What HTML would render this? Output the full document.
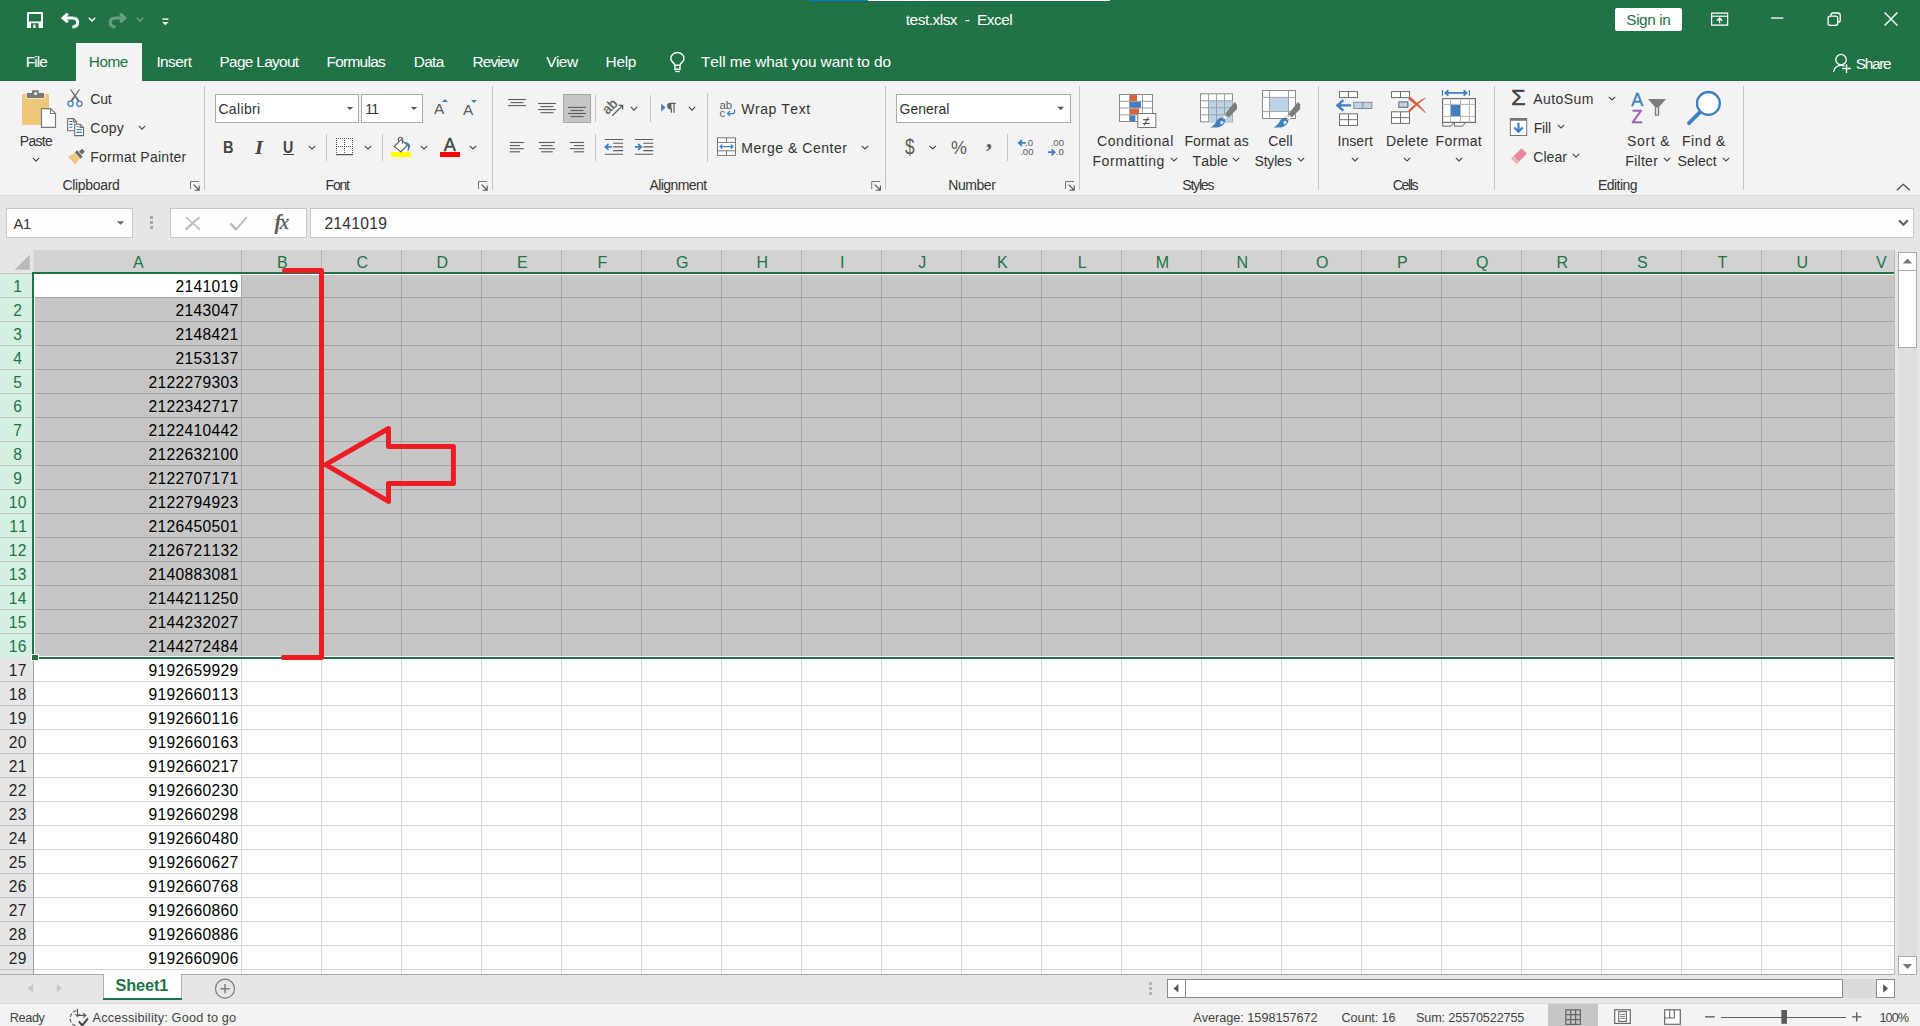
<!DOCTYPE html>
<html lang="en"><head><meta charset="utf-8"><title>test.xlsx - Excel</title>
<style>
html,body{margin:0;padding:0;}
body{width:1920px;height:1026px;overflow:hidden;background:#e6e6e6;position:relative;font-family:"Liberation Sans",sans-serif;font-kerning:none;}
.b{position:absolute;}
.t{position:absolute;white-space:pre;}
svg.ov{position:absolute;left:0;top:0;}
</style></head><body>
<div class="b" style="left:0px;top:0px;width:1920px;height:81px;background:#217346;"></div>
<div class="b" style="left:809px;top:0px;width:59px;height:1px;background:#0078d7;"></div>
<div class="b" style="left:868px;top:0px;width:242px;height:1px;background:#ffffff;"></div>
<div class="b" style="left:76px;top:43px;width:66px;height:38px;background:#f3f3f3;"></div>
<div class="b" style="left:0px;top:81px;width:1920px;height:114px;background:#f3f3f3;"></div>
<div class="b" style="left:0px;top:195px;width:1920px;height:1px;background:#d6d6d6;"></div>
<span class="t " style="left:25.75px;top:53px;font-size:15.4px;line-height:17px;letter-spacing:-0.920px;color:#ffffff;">File</span>
<span class="t " style="left:88.75px;top:53px;font-size:15.4px;line-height:17px;letter-spacing:-0.475px;color:#217346;">Home</span>
<span class="t " style="left:156.40px;top:53px;font-size:15.4px;line-height:17px;letter-spacing:-0.583px;color:#ffffff;">Insert</span>
<span class="t " style="left:219.40px;top:53px;font-size:15.4px;line-height:17px;letter-spacing:-0.668px;color:#ffffff;">Page Layout</span>
<span class="t " style="left:326.50px;top:53px;font-size:15.4px;line-height:17px;letter-spacing:-0.696px;color:#ffffff;">Formulas</span>
<span class="t " style="left:413.80px;top:53px;font-size:15.4px;line-height:17px;letter-spacing:-0.680px;color:#ffffff;">Data</span>
<span class="t " style="left:472.60px;top:53px;font-size:15.4px;line-height:17px;letter-spacing:-0.887px;color:#ffffff;">Review</span>
<span class="t " style="left:546.20px;top:53px;font-size:15.4px;line-height:17px;letter-spacing:-0.515px;color:#ffffff;">View</span>
<span class="t " style="left:605.60px;top:53px;font-size:15.4px;line-height:17px;letter-spacing:-0.290px;color:#ffffff;">Help</span>
<span class="t " style="left:701.00px;top:53px;font-size:15.4px;line-height:17px;letter-spacing:-0.058px;color:#ffffff;">Tell me what you want to do</span>
<span class="t " style="left:905.80px;top:11px;font-size:15.4px;line-height:17px;letter-spacing:-0.479px;color:#ffffff;">test.xlsx  -  Excel</span>
<div class="b" style="left:1615px;top:8px;width:67px;height:23px;background:#ffffff;border-radius:2px;"></div>
<span class="t " style="left:1626.30px;top:11px;font-size:15.4px;line-height:17px;letter-spacing:-0.431px;color:#217346;">Sign in</span>
<span class="t " style="left:1855.80px;top:55px;font-size:15.4px;line-height:17px;letter-spacing:-1.297px;color:#ffffff;">Share</span>
<div class="b" style="left:215px;top:94px;width:144px;height:29px;background:#fff;border:1px solid #ababab;box-sizing:border-box;"></div>
<div class="b" style="left:361px;top:94px;width:62px;height:29px;background:#fff;border:1px solid #ababab;box-sizing:border-box;"></div>
<div class="b" style="left:896px;top:94px;width:175px;height:29px;background:#fff;border:1px solid #ababab;box-sizing:border-box;"></div>
<div class="b" style="left:563px;top:94px;width:28px;height:29px;background:#c6c6c6;border:1px solid #a6a6a6;box-sizing:border-box;"></div>
<span class="t " style="left:19.75px;top:133px;font-size:14px;line-height:16px;letter-spacing:-0.712px;color:#333333;">Paste</span>
<span class="t " style="left:90.25px;top:91px;font-size:14px;line-height:16px;letter-spacing:-0.219px;color:#333333;">Cut</span>
<span class="t " style="left:90.25px;top:120px;font-size:14px;line-height:16px;letter-spacing:0.273px;color:#333333;">Copy</span>
<span class="t " style="left:90.25px;top:149px;font-size:14px;line-height:16px;letter-spacing:0.263px;color:#333333;">Format Painter</span>
<span class="t " style="left:62.50px;top:177px;font-size:14px;line-height:16px;letter-spacing:-0.333px;color:#333333;">Clipboard</span>
<span class="t " style="left:218.40px;top:101px;font-size:14px;line-height:16px;letter-spacing:0.355px;color:#333333;">Calibri</span>
<span class="t " style="left:365.30px;top:101px;font-size:14px;line-height:16px;letter-spacing:-1.829px;color:#333333;">11</span>
<span class="t " style="left:325.50px;top:177px;font-size:14px;line-height:16px;letter-spacing:-1.171px;color:#333333;">Font</span>
<span class="t " style="left:741.25px;top:101px;font-size:14px;line-height:16px;letter-spacing:0.531px;color:#333333;">Wrap Text</span>
<span class="t " style="left:741.25px;top:140px;font-size:14px;line-height:16px;letter-spacing:0.526px;color:#333333;">Merge &amp; Center</span>
<span class="t " style="left:649.40px;top:177px;font-size:14px;line-height:16px;letter-spacing:-0.557px;color:#333333;">Alignment</span>
<span class="t " style="left:899.60px;top:101px;font-size:14px;line-height:16px;letter-spacing:-0.000px;color:#333333;">General</span>
<span class="t " style="left:948.30px;top:177px;font-size:14px;line-height:16px;letter-spacing:-0.458px;color:#333333;">Number</span>
<span class="t " style="left:1096.90px;top:133px;font-size:14px;line-height:16px;letter-spacing:0.646px;color:#333333;">Conditional</span>
<span class="t " style="left:1092.50px;top:153px;font-size:14px;line-height:16px;letter-spacing:0.555px;color:#333333;">Formatting</span>
<span class="t " style="left:1184.40px;top:133px;font-size:14px;line-height:16px;letter-spacing:0.168px;color:#333333;">Format as</span>
<span class="t " style="left:1192.50px;top:153px;font-size:14px;line-height:16px;letter-spacing:0.159px;color:#333333;">Table</span>
<span class="t " style="left:1268.30px;top:133px;font-size:14px;line-height:16px;letter-spacing:0.028px;color:#333333;">Cell</span>
<span class="t " style="left:1254.50px;top:153px;font-size:14px;line-height:16px;letter-spacing:-0.185px;color:#333333;">Styles</span>
<span class="t " style="left:1182.30px;top:177px;font-size:14px;line-height:16px;letter-spacing:-1.205px;color:#333333;">Styles</span>
<span class="t " style="left:1337.50px;top:133px;font-size:14px;line-height:16px;letter-spacing:0.057px;color:#333333;">Insert</span>
<span class="t " style="left:1386.00px;top:133px;font-size:14px;line-height:16px;letter-spacing:0.367px;color:#333333;">Delete</span>
<span class="t " style="left:1435.60px;top:133px;font-size:14px;line-height:16px;letter-spacing:0.353px;color:#333333;">Format</span>
<span class="t " style="left:1392.70px;top:177px;font-size:14px;line-height:16px;letter-spacing:-1.354px;color:#333333;">Cells</span>
<span class="t " style="left:1533.30px;top:91px;font-size:14px;line-height:16px;letter-spacing:0.419px;color:#333333;">AutoSum</span>
<span class="t " style="left:1533.75px;top:120px;font-size:14px;line-height:16px;letter-spacing:-0.210px;color:#333333;">Fill</span>
<span class="t " style="left:1533.30px;top:149px;font-size:14px;line-height:16px;letter-spacing:0.037px;color:#333333;">Clear</span>
<span class="t " style="left:1627.00px;top:133px;font-size:14px;line-height:16px;letter-spacing:0.719px;color:#333333;">Sort &amp;</span>
<span class="t " style="left:1625.30px;top:153px;font-size:14px;line-height:16px;letter-spacing:0.278px;color:#333333;">Filter</span>
<span class="t " style="left:1682.00px;top:133px;font-size:14px;line-height:16px;letter-spacing:0.568px;color:#333333;">Find &amp;</span>
<span class="t " style="left:1677.50px;top:153px;font-size:14px;line-height:16px;letter-spacing:0.058px;color:#333333;">Select</span>
<span class="t " style="left:1598.00px;top:177px;font-size:14px;line-height:16px;letter-spacing:-0.550px;color:#333333;">Editing</span>
<span class="t" style="left:222.6px;top:139px;font-size:16.6px;line-height:18px;font-weight:bold;color:#444;transform:scaleX(0.88);transform-origin:0 0">B</span>
<span class="t" style="left:254.6px;top:138.6px;font-size:18px;line-height:18px;font-weight:bold;font-style:italic;font-family:'Liberation Serif',serif;color:#444;transform:scaleX(1.15);transform-origin:0 0">I</span>
<span class="t" style="left:282.8px;top:139px;font-size:15.8px;line-height:18px;font-weight:bold;color:#444;letter-spacing:0;transform:scaleX(0.9);transform-origin:0 0">U</span>
<div class="b" style="left:283px;top:154px;width:11px;height:1px;background:#444;"></div>
<span class="t " style="left:433.90px;top:100px;font-size:15.4px;line-height:17px;letter-spacing:0.000px;color:#5c5c5c;">A</span>
<span class="t " style="left:463.00px;top:101px;font-size:15.4px;line-height:17px;letter-spacing:0.000px;color:#5c5c5c;">A</span>
<span class="t" style="left:443.7px;top:135.6px;font-size:18.2px;line-height:18px;color:#444;-webkit-text-stroke:0.35px #444">A</span>
<div class="b" style="left:440px;top:152px;width:20px;height:5px;background:#ff0000;"></div>
<div class="b" style="left:391px;top:152px;width:20px;height:5px;background:#ffff00;"></div>
<span class="t" style="left:904.6px;top:136.4px;font-size:21.5px;line-height:22px;color:#5c5c5c;transform:scaleX(0.8);transform-origin:0 0">$</span>
<span class="t" style="left:950.6px;top:138.4px;font-size:18.6px;line-height:19px;color:#5c5c5c;letter-spacing:-1px;transform:scaleX(0.96);transform-origin:0 0">%</span>
<span class="t" style="left:986px;top:127px;font-size:24px;line-height:24px;font-weight:bold;color:#5c5c5c;font-family:'Liberation Serif',serif">,</span>
<span class="t" style="left:1510.6px;top:87.3px;font-size:22px;line-height:22px;color:#444;-webkit-text-stroke:0.4px #444;transform:scaleX(1.08);transform-origin:0 0">&Sigma;</span>
<div class="b" style="left:204px;top:86px;width:1px;height:104px;background:#c4c4c4;"></div>
<div class="b" style="left:492px;top:86px;width:1px;height:104px;background:#c4c4c4;"></div>
<div class="b" style="left:885px;top:86px;width:1px;height:104px;background:#c4c4c4;"></div>
<div class="b" style="left:1079px;top:86px;width:1px;height:104px;background:#c4c4c4;"></div>
<div class="b" style="left:1318px;top:86px;width:1px;height:104px;background:#c4c4c4;"></div>
<div class="b" style="left:1494px;top:86px;width:1px;height:104px;background:#c4c4c4;"></div>
<div class="b" style="left:1743px;top:86px;width:1px;height:104px;background:#c4c4c4;"></div>
<div class="b" style="left:707px;top:93px;width:1px;height:69px;background:#c4c4c4;"></div>
<div class="b" style="left:326px;top:134px;width:1px;height:27px;background:#c4c4c4;"></div>
<div class="b" style="left:382px;top:134px;width:1px;height:27px;background:#c4c4c4;"></div>
<div class="b" style="left:595px;top:95px;width:1px;height:27px;background:#c4c4c4;"></div>
<div class="b" style="left:650px;top:95px;width:1px;height:27px;background:#c4c4c4;"></div>
<div class="b" style="left:595px;top:134px;width:1px;height:27px;background:#c4c4c4;"></div>
<div class="b" style="left:1007px;top:134px;width:1px;height:27px;background:#c4c4c4;"></div>
<div class="b" style="left:6px;top:208px;width:127px;height:30px;background:#fdfdfd;border:1px solid #c8c8c8;box-sizing:border-box;"></div>
<div class="b" style="left:170px;top:208px;width:137px;height:30px;background:#fdfdfd;border:1px solid #c8c8c8;box-sizing:border-box;"></div>
<div class="b" style="left:310px;top:208px;width:1604px;height:30px;background:#fdfdfd;border:1px solid #c8c8c8;box-sizing:border-box;"></div>
<span class="t " style="left:13.50px;top:216px;font-size:14.7px;line-height:16px;letter-spacing:-0.228px;color:#333;">A1</span>
<span class="t " style="left:324.40px;top:215px;font-size:15.6px;line-height:17px;letter-spacing:0.296px;color:#333;">2141019</span>
<span class="t" style="left:274.6px;top:209.5px;font-size:20.5px;line-height:24px;font-style:italic;font-family:'Liberation Serif',serif;color:#5c5c5c;letter-spacing:-1.6px;font-weight:bold">f<span style="font-weight:normal;-webkit-text-stroke:0.3px #5c5c5c">x</span></span>
<div class="b" style="left:150px;top:216px;width:3px;height:3px;background:#a8a8a8;"></div>
<div class="b" style="left:150px;top:221px;width:3px;height:3px;background:#a8a8a8;"></div>
<div class="b" style="left:150px;top:226px;width:3px;height:3px;background:#a8a8a8;"></div>
<div class="b" style="left:34px;top:274px;width:1860px;height:700px;background:#ffffff;"></div>
<div class="b" style="left:33px;top:250px;width:1861px;height:22px;background:#d2d2d2;"></div>
<div class="b" style="left:35px;top:275px;width:1859px;height:382px;background:#c6c6c6;"></div>
<div class="b" style="left:35px;top:275px;width:206px;height:22px;background:#ffffff;"></div>
<div class="b" style="left:0px;top:274px;width:33px;height:384px;background:#d3f0e0;"></div>
<div class="b" style="left:0px;top:658px;width:33px;height:316px;background:#e6e6e6;"></div>
<div class="b" style="left:241px;top:250px;width:1px;height:22px;background:#b4b4b4;"></div>
<div class="b" style="left:241px;top:275px;width:1px;height:382px;background:#a3a3a3;"></div>
<div class="b" style="left:241px;top:659px;width:1px;height:315px;background:#d4d4d4;"></div>
<div class="b" style="left:321px;top:250px;width:1px;height:22px;background:#b4b4b4;"></div>
<div class="b" style="left:321px;top:275px;width:1px;height:382px;background:#a3a3a3;"></div>
<div class="b" style="left:321px;top:659px;width:1px;height:315px;background:#d4d4d4;"></div>
<div class="b" style="left:401px;top:250px;width:1px;height:22px;background:#b4b4b4;"></div>
<div class="b" style="left:401px;top:275px;width:1px;height:382px;background:#a3a3a3;"></div>
<div class="b" style="left:401px;top:659px;width:1px;height:315px;background:#d4d4d4;"></div>
<div class="b" style="left:481px;top:250px;width:1px;height:22px;background:#b4b4b4;"></div>
<div class="b" style="left:481px;top:275px;width:1px;height:382px;background:#a3a3a3;"></div>
<div class="b" style="left:481px;top:659px;width:1px;height:315px;background:#d4d4d4;"></div>
<div class="b" style="left:561px;top:250px;width:1px;height:22px;background:#b4b4b4;"></div>
<div class="b" style="left:561px;top:275px;width:1px;height:382px;background:#a3a3a3;"></div>
<div class="b" style="left:561px;top:659px;width:1px;height:315px;background:#d4d4d4;"></div>
<div class="b" style="left:641px;top:250px;width:1px;height:22px;background:#b4b4b4;"></div>
<div class="b" style="left:641px;top:275px;width:1px;height:382px;background:#a3a3a3;"></div>
<div class="b" style="left:641px;top:659px;width:1px;height:315px;background:#d4d4d4;"></div>
<div class="b" style="left:721px;top:250px;width:1px;height:22px;background:#b4b4b4;"></div>
<div class="b" style="left:721px;top:275px;width:1px;height:382px;background:#a3a3a3;"></div>
<div class="b" style="left:721px;top:659px;width:1px;height:315px;background:#d4d4d4;"></div>
<div class="b" style="left:801px;top:250px;width:1px;height:22px;background:#b4b4b4;"></div>
<div class="b" style="left:801px;top:275px;width:1px;height:382px;background:#a3a3a3;"></div>
<div class="b" style="left:801px;top:659px;width:1px;height:315px;background:#d4d4d4;"></div>
<div class="b" style="left:881px;top:250px;width:1px;height:22px;background:#b4b4b4;"></div>
<div class="b" style="left:881px;top:275px;width:1px;height:382px;background:#a3a3a3;"></div>
<div class="b" style="left:881px;top:659px;width:1px;height:315px;background:#d4d4d4;"></div>
<div class="b" style="left:961px;top:250px;width:1px;height:22px;background:#b4b4b4;"></div>
<div class="b" style="left:961px;top:275px;width:1px;height:382px;background:#a3a3a3;"></div>
<div class="b" style="left:961px;top:659px;width:1px;height:315px;background:#d4d4d4;"></div>
<div class="b" style="left:1041px;top:250px;width:1px;height:22px;background:#b4b4b4;"></div>
<div class="b" style="left:1041px;top:275px;width:1px;height:382px;background:#a3a3a3;"></div>
<div class="b" style="left:1041px;top:659px;width:1px;height:315px;background:#d4d4d4;"></div>
<div class="b" style="left:1121px;top:250px;width:1px;height:22px;background:#b4b4b4;"></div>
<div class="b" style="left:1121px;top:275px;width:1px;height:382px;background:#a3a3a3;"></div>
<div class="b" style="left:1121px;top:659px;width:1px;height:315px;background:#d4d4d4;"></div>
<div class="b" style="left:1201px;top:250px;width:1px;height:22px;background:#b4b4b4;"></div>
<div class="b" style="left:1201px;top:275px;width:1px;height:382px;background:#a3a3a3;"></div>
<div class="b" style="left:1201px;top:659px;width:1px;height:315px;background:#d4d4d4;"></div>
<div class="b" style="left:1281px;top:250px;width:1px;height:22px;background:#b4b4b4;"></div>
<div class="b" style="left:1281px;top:275px;width:1px;height:382px;background:#a3a3a3;"></div>
<div class="b" style="left:1281px;top:659px;width:1px;height:315px;background:#d4d4d4;"></div>
<div class="b" style="left:1361px;top:250px;width:1px;height:22px;background:#b4b4b4;"></div>
<div class="b" style="left:1361px;top:275px;width:1px;height:382px;background:#a3a3a3;"></div>
<div class="b" style="left:1361px;top:659px;width:1px;height:315px;background:#d4d4d4;"></div>
<div class="b" style="left:1441px;top:250px;width:1px;height:22px;background:#b4b4b4;"></div>
<div class="b" style="left:1441px;top:275px;width:1px;height:382px;background:#a3a3a3;"></div>
<div class="b" style="left:1441px;top:659px;width:1px;height:315px;background:#d4d4d4;"></div>
<div class="b" style="left:1521px;top:250px;width:1px;height:22px;background:#b4b4b4;"></div>
<div class="b" style="left:1521px;top:275px;width:1px;height:382px;background:#a3a3a3;"></div>
<div class="b" style="left:1521px;top:659px;width:1px;height:315px;background:#d4d4d4;"></div>
<div class="b" style="left:1601px;top:250px;width:1px;height:22px;background:#b4b4b4;"></div>
<div class="b" style="left:1601px;top:275px;width:1px;height:382px;background:#a3a3a3;"></div>
<div class="b" style="left:1601px;top:659px;width:1px;height:315px;background:#d4d4d4;"></div>
<div class="b" style="left:1681px;top:250px;width:1px;height:22px;background:#b4b4b4;"></div>
<div class="b" style="left:1681px;top:275px;width:1px;height:382px;background:#a3a3a3;"></div>
<div class="b" style="left:1681px;top:659px;width:1px;height:315px;background:#d4d4d4;"></div>
<div class="b" style="left:1761px;top:250px;width:1px;height:22px;background:#b4b4b4;"></div>
<div class="b" style="left:1761px;top:275px;width:1px;height:382px;background:#a3a3a3;"></div>
<div class="b" style="left:1761px;top:659px;width:1px;height:315px;background:#d4d4d4;"></div>
<div class="b" style="left:1841px;top:250px;width:1px;height:22px;background:#b4b4b4;"></div>
<div class="b" style="left:1841px;top:275px;width:1px;height:382px;background:#a3a3a3;"></div>
<div class="b" style="left:1841px;top:659px;width:1px;height:315px;background:#d4d4d4;"></div>
<div class="b" style="left:241px;top:275px;width:1px;height:22px;background:#a3a3a3;"></div>
<div class="b" style="left:35px;top:297px;width:1859px;height:1px;background:#a3a3a3;"></div>
<div class="b" style="left:0px;top:297px;width:32px;height:1px;background:#c4c8c5;"></div>
<div class="b" style="left:35px;top:321px;width:1859px;height:1px;background:#a3a3a3;"></div>
<div class="b" style="left:0px;top:321px;width:32px;height:1px;background:#c4c8c5;"></div>
<div class="b" style="left:35px;top:345px;width:1859px;height:1px;background:#a3a3a3;"></div>
<div class="b" style="left:0px;top:345px;width:32px;height:1px;background:#c4c8c5;"></div>
<div class="b" style="left:35px;top:369px;width:1859px;height:1px;background:#a3a3a3;"></div>
<div class="b" style="left:0px;top:369px;width:32px;height:1px;background:#c4c8c5;"></div>
<div class="b" style="left:35px;top:393px;width:1859px;height:1px;background:#a3a3a3;"></div>
<div class="b" style="left:0px;top:393px;width:32px;height:1px;background:#c4c8c5;"></div>
<div class="b" style="left:35px;top:417px;width:1859px;height:1px;background:#a3a3a3;"></div>
<div class="b" style="left:0px;top:417px;width:32px;height:1px;background:#c4c8c5;"></div>
<div class="b" style="left:35px;top:441px;width:1859px;height:1px;background:#a3a3a3;"></div>
<div class="b" style="left:0px;top:441px;width:32px;height:1px;background:#c4c8c5;"></div>
<div class="b" style="left:35px;top:465px;width:1859px;height:1px;background:#a3a3a3;"></div>
<div class="b" style="left:0px;top:465px;width:32px;height:1px;background:#c4c8c5;"></div>
<div class="b" style="left:35px;top:489px;width:1859px;height:1px;background:#a3a3a3;"></div>
<div class="b" style="left:0px;top:489px;width:32px;height:1px;background:#c4c8c5;"></div>
<div class="b" style="left:35px;top:513px;width:1859px;height:1px;background:#a3a3a3;"></div>
<div class="b" style="left:0px;top:513px;width:32px;height:1px;background:#c4c8c5;"></div>
<div class="b" style="left:35px;top:537px;width:1859px;height:1px;background:#a3a3a3;"></div>
<div class="b" style="left:0px;top:537px;width:32px;height:1px;background:#c4c8c5;"></div>
<div class="b" style="left:35px;top:561px;width:1859px;height:1px;background:#a3a3a3;"></div>
<div class="b" style="left:0px;top:561px;width:32px;height:1px;background:#c4c8c5;"></div>
<div class="b" style="left:35px;top:585px;width:1859px;height:1px;background:#a3a3a3;"></div>
<div class="b" style="left:0px;top:585px;width:32px;height:1px;background:#c4c8c5;"></div>
<div class="b" style="left:35px;top:609px;width:1859px;height:1px;background:#a3a3a3;"></div>
<div class="b" style="left:0px;top:609px;width:32px;height:1px;background:#c4c8c5;"></div>
<div class="b" style="left:35px;top:633px;width:1859px;height:1px;background:#a3a3a3;"></div>
<div class="b" style="left:0px;top:633px;width:32px;height:1px;background:#c4c8c5;"></div>
<div class="b" style="left:34px;top:681px;width:1860px;height:1px;background:#d4d4d4;"></div>
<div class="b" style="left:0px;top:681px;width:33px;height:1px;background:#c3c3c3;"></div>
<div class="b" style="left:34px;top:705px;width:1860px;height:1px;background:#d4d4d4;"></div>
<div class="b" style="left:0px;top:705px;width:33px;height:1px;background:#c3c3c3;"></div>
<div class="b" style="left:34px;top:729px;width:1860px;height:1px;background:#d4d4d4;"></div>
<div class="b" style="left:0px;top:729px;width:33px;height:1px;background:#c3c3c3;"></div>
<div class="b" style="left:34px;top:753px;width:1860px;height:1px;background:#d4d4d4;"></div>
<div class="b" style="left:0px;top:753px;width:33px;height:1px;background:#c3c3c3;"></div>
<div class="b" style="left:34px;top:777px;width:1860px;height:1px;background:#d4d4d4;"></div>
<div class="b" style="left:0px;top:777px;width:33px;height:1px;background:#c3c3c3;"></div>
<div class="b" style="left:34px;top:801px;width:1860px;height:1px;background:#d4d4d4;"></div>
<div class="b" style="left:0px;top:801px;width:33px;height:1px;background:#c3c3c3;"></div>
<div class="b" style="left:34px;top:825px;width:1860px;height:1px;background:#d4d4d4;"></div>
<div class="b" style="left:0px;top:825px;width:33px;height:1px;background:#c3c3c3;"></div>
<div class="b" style="left:34px;top:849px;width:1860px;height:1px;background:#d4d4d4;"></div>
<div class="b" style="left:0px;top:849px;width:33px;height:1px;background:#c3c3c3;"></div>
<div class="b" style="left:34px;top:873px;width:1860px;height:1px;background:#d4d4d4;"></div>
<div class="b" style="left:0px;top:873px;width:33px;height:1px;background:#c3c3c3;"></div>
<div class="b" style="left:34px;top:897px;width:1860px;height:1px;background:#d4d4d4;"></div>
<div class="b" style="left:0px;top:897px;width:33px;height:1px;background:#c3c3c3;"></div>
<div class="b" style="left:34px;top:921px;width:1860px;height:1px;background:#d4d4d4;"></div>
<div class="b" style="left:0px;top:921px;width:33px;height:1px;background:#c3c3c3;"></div>
<div class="b" style="left:34px;top:945px;width:1860px;height:1px;background:#d4d4d4;"></div>
<div class="b" style="left:0px;top:945px;width:33px;height:1px;background:#c3c3c3;"></div>
<div class="b" style="left:34px;top:969px;width:1860px;height:1px;background:#d4d4d4;"></div>
<div class="b" style="left:0px;top:969px;width:33px;height:1px;background:#c3c3c3;"></div>
<div class="b" style="left:33px;top:659px;width:1px;height:315px;background:#a0a0a0;"></div>
<div class="b" style="left:0px;top:273px;width:32px;height:1px;background:#c6c6c6;"></div>
<div class="b" style="left:33px;top:250px;width:1px;height:22px;background:#dcdcdc;"></div>
<div class="b" style="left:0px;top:974px;width:1895px;height:1px;background:#a8a8a8;"></div>
<div class="b" style="left:1894px;top:250px;width:1px;height:725px;background:#bdbdbd;"></div>
<div class="b" style="left:32px;top:272px;width:1862px;height:2px;background:#217346;"></div>
<div class="b" style="left:32px;top:272px;width:2px;height:386px;background:#217346;"></div>
<div class="b" style="left:32px;top:657px;width:1862px;height:2px;background:#217346;"></div>
<div class="b" style="left:34px;top:274px;width:1860px;height:1px;background:#ffffff;"></div>
<div class="b" style="left:34px;top:274px;width:1px;height:383px;background:#ffffff;"></div>
<div class="b" style="left:34px;top:656px;width:1860px;height:1px;background:#ffffff;"></div>
<div class="b" style="left:31px;top:654px;width:8px;height:7px;background:#ffffff;"></div>
<div class="b" style="left:32px;top:655px;width:6px;height:5px;background:#217346;"></div>
<div class="b" style="left:0px;top:654px;width:31px;height:4px;background:#d3f0e0;"></div>
<span class="t" style="left:132.96px;top:254px;font-size:16px;line-height:17px;color:#217346">A</span>
<span class="t" style="left:276.96px;top:254px;font-size:16px;line-height:17px;color:#217346">B</span>
<span class="t" style="left:356.52px;top:254px;font-size:16px;line-height:17px;color:#217346">C</span>
<span class="t" style="left:436.52px;top:254px;font-size:16px;line-height:17px;color:#217346">D</span>
<span class="t" style="left:516.96px;top:254px;font-size:16px;line-height:17px;color:#217346">E</span>
<span class="t" style="left:597.41px;top:254px;font-size:16px;line-height:17px;color:#217346">F</span>
<span class="t" style="left:676.08px;top:254px;font-size:16px;line-height:17px;color:#217346">G</span>
<span class="t" style="left:756.52px;top:254px;font-size:16px;line-height:17px;color:#217346">H</span>
<span class="t" style="left:840.08px;top:254px;font-size:16px;line-height:17px;color:#217346">I</span>
<span class="t" style="left:918.30px;top:254px;font-size:16px;line-height:17px;color:#217346">J</span>
<span class="t" style="left:996.96px;top:254px;font-size:16px;line-height:17px;color:#217346">K</span>
<span class="t" style="left:1077.85px;top:254px;font-size:16px;line-height:17px;color:#217346">L</span>
<span class="t" style="left:1155.64px;top:254px;font-size:16px;line-height:17px;color:#217346">M</span>
<span class="t" style="left:1236.52px;top:254px;font-size:16px;line-height:17px;color:#217346">N</span>
<span class="t" style="left:1316.08px;top:254px;font-size:16px;line-height:17px;color:#217346">O</span>
<span class="t" style="left:1396.96px;top:254px;font-size:16px;line-height:17px;color:#217346">P</span>
<span class="t" style="left:1476.08px;top:254px;font-size:16px;line-height:17px;color:#217346">Q</span>
<span class="t" style="left:1556.52px;top:254px;font-size:16px;line-height:17px;color:#217346">R</span>
<span class="t" style="left:1636.96px;top:254px;font-size:16px;line-height:17px;color:#217346">S</span>
<span class="t" style="left:1717.41px;top:254px;font-size:16px;line-height:17px;color:#217346">T</span>
<span class="t" style="left:1796.52px;top:254px;font-size:16px;line-height:17px;color:#217346">U</span>
<span class="t" style="left:1875.96px;top:254px;font-size:16px;line-height:17px;color:#217346">V</span>
<span class="t" style="left:13.20px;top:278px;font-size:15.6px;line-height:17px;color:#217346;letter-spacing:0.33px">1</span>
<span class="t" style="left:13.20px;top:302px;font-size:15.6px;line-height:17px;color:#217346;letter-spacing:0.33px">2</span>
<span class="t" style="left:13.20px;top:326px;font-size:15.6px;line-height:17px;color:#217346;letter-spacing:0.33px">3</span>
<span class="t" style="left:13.20px;top:350px;font-size:15.6px;line-height:17px;color:#217346;letter-spacing:0.33px">4</span>
<span class="t" style="left:13.20px;top:374px;font-size:15.6px;line-height:17px;color:#217346;letter-spacing:0.33px">5</span>
<span class="t" style="left:13.20px;top:398px;font-size:15.6px;line-height:17px;color:#217346;letter-spacing:0.33px">6</span>
<span class="t" style="left:13.20px;top:422px;font-size:15.6px;line-height:17px;color:#217346;letter-spacing:0.33px">7</span>
<span class="t" style="left:13.20px;top:446px;font-size:15.6px;line-height:17px;color:#217346;letter-spacing:0.33px">8</span>
<span class="t" style="left:13.20px;top:470px;font-size:15.6px;line-height:17px;color:#217346;letter-spacing:0.33px">9</span>
<span class="t" style="left:8.69px;top:494px;font-size:15.6px;line-height:17px;color:#217346;letter-spacing:0.33px">10</span>
<span class="t" style="left:9.27px;top:518px;font-size:15.6px;line-height:17px;color:#217346;letter-spacing:0.33px">11</span>
<span class="t" style="left:8.69px;top:542px;font-size:15.6px;line-height:17px;color:#217346;letter-spacing:0.33px">12</span>
<span class="t" style="left:8.69px;top:566px;font-size:15.6px;line-height:17px;color:#217346;letter-spacing:0.33px">13</span>
<span class="t" style="left:8.69px;top:590px;font-size:15.6px;line-height:17px;color:#217346;letter-spacing:0.33px">14</span>
<span class="t" style="left:8.69px;top:614px;font-size:15.6px;line-height:17px;color:#217346;letter-spacing:0.33px">15</span>
<span class="t" style="left:8.69px;top:638px;font-size:15.6px;line-height:17px;color:#217346;letter-spacing:0.33px">16</span>
<span class="t" style="left:8.69px;top:662px;font-size:15.6px;line-height:17px;color:#262626;letter-spacing:0.33px">17</span>
<span class="t" style="left:8.69px;top:686px;font-size:15.6px;line-height:17px;color:#262626;letter-spacing:0.33px">18</span>
<span class="t" style="left:8.69px;top:710px;font-size:15.6px;line-height:17px;color:#262626;letter-spacing:0.33px">19</span>
<span class="t" style="left:8.69px;top:734px;font-size:15.6px;line-height:17px;color:#262626;letter-spacing:0.33px">20</span>
<span class="t" style="left:8.69px;top:758px;font-size:15.6px;line-height:17px;color:#262626;letter-spacing:0.33px">21</span>
<span class="t" style="left:8.69px;top:782px;font-size:15.6px;line-height:17px;color:#262626;letter-spacing:0.33px">22</span>
<span class="t" style="left:8.69px;top:806px;font-size:15.6px;line-height:17px;color:#262626;letter-spacing:0.33px">23</span>
<span class="t" style="left:8.69px;top:830px;font-size:15.6px;line-height:17px;color:#262626;letter-spacing:0.33px">24</span>
<span class="t" style="left:8.69px;top:854px;font-size:15.6px;line-height:17px;color:#262626;letter-spacing:0.33px">25</span>
<span class="t" style="left:8.69px;top:878px;font-size:15.6px;line-height:17px;color:#262626;letter-spacing:0.33px">26</span>
<span class="t" style="left:8.69px;top:902px;font-size:15.6px;line-height:17px;color:#262626;letter-spacing:0.33px">27</span>
<span class="t" style="left:8.69px;top:926px;font-size:15.6px;line-height:17px;color:#262626;letter-spacing:0.33px">28</span>
<span class="t" style="left:8.69px;top:950px;font-size:15.6px;line-height:17px;color:#262626;letter-spacing:0.33px">29</span>
<span class="t" style="right:1681.4px;top:278px;font-size:15.6px;line-height:17px;color:#000;letter-spacing:0.33px">2141019</span>
<span class="t" style="right:1681.4px;top:302px;font-size:15.6px;line-height:17px;color:#000;letter-spacing:0.33px">2143047</span>
<span class="t" style="right:1681.4px;top:326px;font-size:15.6px;line-height:17px;color:#000;letter-spacing:0.33px">2148421</span>
<span class="t" style="right:1681.4px;top:350px;font-size:15.6px;line-height:17px;color:#000;letter-spacing:0.33px">2153137</span>
<span class="t" style="right:1681.4px;top:374px;font-size:15.6px;line-height:17px;color:#000;letter-spacing:0.33px">2122279303</span>
<span class="t" style="right:1681.4px;top:398px;font-size:15.6px;line-height:17px;color:#000;letter-spacing:0.33px">2122342717</span>
<span class="t" style="right:1681.4px;top:422px;font-size:15.6px;line-height:17px;color:#000;letter-spacing:0.33px">2122410442</span>
<span class="t" style="right:1681.4px;top:446px;font-size:15.6px;line-height:17px;color:#000;letter-spacing:0.33px">2122632100</span>
<span class="t" style="right:1681.4px;top:470px;font-size:15.6px;line-height:17px;color:#000;letter-spacing:0.33px">2122707171</span>
<span class="t" style="right:1681.4px;top:494px;font-size:15.6px;line-height:17px;color:#000;letter-spacing:0.33px">2122794923</span>
<span class="t" style="right:1681.4px;top:518px;font-size:15.6px;line-height:17px;color:#000;letter-spacing:0.33px">2126450501</span>
<span class="t" style="right:1681.4px;top:542px;font-size:15.6px;line-height:17px;color:#000;letter-spacing:0.33px">2126721132</span>
<span class="t" style="right:1681.4px;top:566px;font-size:15.6px;line-height:17px;color:#000;letter-spacing:0.33px">2140883081</span>
<span class="t" style="right:1681.4px;top:590px;font-size:15.6px;line-height:17px;color:#000;letter-spacing:0.33px">2144211250</span>
<span class="t" style="right:1681.4px;top:614px;font-size:15.6px;line-height:17px;color:#000;letter-spacing:0.33px">2144232027</span>
<span class="t" style="right:1681.4px;top:638px;font-size:15.6px;line-height:17px;color:#000;letter-spacing:0.33px">2144272484</span>
<span class="t" style="right:1681.4px;top:662px;font-size:15.6px;line-height:17px;color:#000;letter-spacing:0.33px">9192659929</span>
<span class="t" style="right:1681.4px;top:686px;font-size:15.6px;line-height:17px;color:#000;letter-spacing:0.33px">9192660113</span>
<span class="t" style="right:1681.4px;top:710px;font-size:15.6px;line-height:17px;color:#000;letter-spacing:0.33px">9192660116</span>
<span class="t" style="right:1681.4px;top:734px;font-size:15.6px;line-height:17px;color:#000;letter-spacing:0.33px">9192660163</span>
<span class="t" style="right:1681.4px;top:758px;font-size:15.6px;line-height:17px;color:#000;letter-spacing:0.33px">9192660217</span>
<span class="t" style="right:1681.4px;top:782px;font-size:15.6px;line-height:17px;color:#000;letter-spacing:0.33px">9192660230</span>
<span class="t" style="right:1681.4px;top:806px;font-size:15.6px;line-height:17px;color:#000;letter-spacing:0.33px">9192660298</span>
<span class="t" style="right:1681.4px;top:830px;font-size:15.6px;line-height:17px;color:#000;letter-spacing:0.33px">9192660480</span>
<span class="t" style="right:1681.4px;top:854px;font-size:15.6px;line-height:17px;color:#000;letter-spacing:0.33px">9192660627</span>
<span class="t" style="right:1681.4px;top:878px;font-size:15.6px;line-height:17px;color:#000;letter-spacing:0.33px">9192660768</span>
<span class="t" style="right:1681.4px;top:902px;font-size:15.6px;line-height:17px;color:#000;letter-spacing:0.33px">9192660860</span>
<span class="t" style="right:1681.4px;top:926px;font-size:15.6px;line-height:17px;color:#000;letter-spacing:0.33px">9192660886</span>
<span class="t" style="right:1681.4px;top:950px;font-size:15.6px;line-height:17px;color:#000;letter-spacing:0.33px">9192660906</span>
<div class="b" style="left:1898px;top:252px;width:19px;height:723px;background:#dedede;"></div>
<div class="b" style="left:1898px;top:252px;width:19px;height:19px;background:#fff;border:1px solid #ababab;box-sizing:border-box;"></div>
<div class="b" style="left:1898px;top:270px;width:19px;height:78px;background:#fff;border:1px solid #ababab;box-sizing:border-box;"></div>
<div class="b" style="left:1898px;top:956px;width:19px;height:19px;background:#fff;border:1px solid #ababab;box-sizing:border-box;"></div>
<div class="b" style="left:1167px;top:979px;width:728px;height:19px;background:#dadada;"></div>
<div class="b" style="left:1167px;top:979px;width:19px;height:19px;background:#fff;border:1px solid #8a8a8a;box-sizing:border-box;"></div>
<div class="b" style="left:1185px;top:979px;width:658px;height:19px;background:#fff;border:1px solid #8a8a8a;box-sizing:border-box;"></div>
<div class="b" style="left:1876px;top:979px;width:19px;height:19px;background:#fff;border:1px solid #8a8a8a;box-sizing:border-box;"></div>
<div class="b" style="left:1149px;top:982px;width:3px;height:3px;background:#b5b5b5;"></div>
<div class="b" style="left:1149px;top:987px;width:3px;height:3px;background:#b5b5b5;"></div>
<div class="b" style="left:1149px;top:992px;width:3px;height:3px;background:#b5b5b5;"></div>
<div class="b" style="left:103px;top:975px;width:79px;height:25px;background:#ffffff;"></div>
<div class="b" style="left:103px;top:975px;width:1px;height:25px;background:#b0b0b0;"></div>
<div class="b" style="left:181px;top:975px;width:1px;height:25px;background:#b0b0b0;"></div>
<div class="b" style="left:103px;top:998px;width:79px;height:2px;background:#217346;"></div>
<div class="b" style="left:104px;top:974px;width:77px;height:1px;background:#ffffff;"></div>
<span class="t " style="left:115.50px;top:976px;font-size:16.3px;line-height:18px;letter-spacing:-0.129px;color:#217346;font-weight:bold;">Sheet1</span>
<div class="b" style="left:0px;top:1003px;width:1920px;height:1px;background:#d9d9d9;"></div>
<div class="b" style="left:0px;top:1004px;width:1920px;height:22px;background:#f3f3f3;"></div>
<div class="b" style="left:1548px;top:1004px;width:50px;height:22px;background:#c6c6c6;"></div>
<span class="t " style="left:9.70px;top:1011px;font-size:12.7px;line-height:14px;letter-spacing:-0.352px;color:#444;">Ready</span>
<span class="t " style="left:92.50px;top:1011px;font-size:12.7px;line-height:14px;letter-spacing:0.198px;color:#444;">Accessibility: Good to go</span>
<span class="t " style="left:1193.30px;top:1011px;font-size:12.7px;line-height:14px;letter-spacing:-0.030px;color:#444;">Average: 1598157672</span>
<span class="t " style="left:1341.50px;top:1011px;font-size:12.7px;line-height:14px;letter-spacing:-0.121px;color:#444;">Count: 16</span>
<span class="t " style="left:1416.00px;top:1011px;font-size:12.7px;line-height:14px;letter-spacing:-0.157px;color:#444;">Sum: 25570522755</span>
<span class="t " style="left:1879.50px;top:1011px;font-size:12.7px;line-height:14px;letter-spacing:-0.993px;color:#444;">100%</span>
<svg class="ov" width="1920" height="1026" viewBox="0 0 1920 1026">
<path d="M27 12h16v16h-16z M29 14v7.5h12V14z M31 23.3v4.7h7.6v-4.7z M33.3 24.6 h2.2 v3.4 h-2.2z" fill="#fff" fill-rule="evenodd"/>
<path d="M67.8 13.6 L63 17.9 L67.8 22.2 M63.4 17.9 H72 Q77.7 17.9 77.7 22.6 Q77.7 26.8 72.4 27" fill="none" stroke="#fff" stroke-width="3" stroke-linejoin="miter"/>
<g opacity="0.32" transform="translate(187.9,0) scale(-1,1)">
<path d="M67.8 13.6 L63 17.9 L67.8 22.2 M63.4 17.9 H72 Q77.7 17.9 77.7 22.6 Q77.7 26.8 72.4 27" fill="none" stroke="#fff" stroke-width="3" />
</g>
<path d="M88.80 17.80 L92.00 21.00 L95.20 17.80" fill="none" stroke="#fff" stroke-width="1.5"/>
<path d="M136.80 17.80 L140.00 21.00 L143.20 17.80" fill="none" stroke="#6fa686" stroke-width="1.5"/>
<rect x="162.4" y="18.4" width="6" height="1.4" fill="#fff" />
<path d="M162.30 21.95 H168.50 L165.40 25.25 Z" fill="#fff"/>
<rect x="1711.6" y="13.1" width="16" height="12" fill="none" stroke="#fff" stroke-width="1.3" />
<path d="M1711 16.2 L1728 16.2" stroke="#fff" stroke-width="1.2" fill="none" />
<path d="M1719.6 23.3 V18.2 M1716.9 20.8 L1719.6 18 L1722.3 20.8" fill="none" stroke="#fff" stroke-width="1.3" />
<rect x="1771" y="17.4" width="12.4" height="1.3" fill="#fff" />
<rect x="1828.1" y="16.1" width="9.6" height="9.2" fill="none" stroke="#fff" stroke-width="1.3" rx="2"/>
<path d="M1831 15.8 V15 a2 2 0 0 1 2 -2 h5 a2.2 2.2 0 0 1 2.2 2.2 v5 a2 2 0 0 1 -2 2 h-0.6" fill="none" stroke="#fff" stroke-width="1.3" />
<path d="M1884.6 12.6 L1897.4 25.4 M1897.4 12.6 L1884.6 25.4" fill="none" stroke="#fff" stroke-width="1.4" />
<circle cx="1841.05" cy="59.65" r="5.2" fill="none" stroke="#fff" stroke-width="1.3"/>
<path d="M1833.5 72.2 Q1834.4 65.8 1840.6 65.3 Q1843 65.2 1844.6 66" fill="none" stroke="#fff" stroke-width="1.3" />
<path d="M1846.5 64.3 V73.1 M1842.1 68.5 H1850.8" fill="none" stroke="#fff" stroke-width="1.4" />
<path d="M674.9 65.3 C674.8 62.6 670.8 62.4 670.8 58.6 A6.6 6.1 0 0 1 684 58.6 C684 62.4 680 62.6 679.9 65.3" fill="none" stroke="#fff" stroke-width="1.4" />
<path d="M674.9 65.2 H680 V69.3 H674.9 Z" fill="none" stroke="#fff" stroke-width="1.4" />
<path d="M675.2 71.5 H679.8" fill="none" stroke="#fff" stroke-width="1.3" />
<rect x="22" y="94" width="27" height="31" fill="#eec77a" rx="1.5"/>
<rect x="26.4" y="93" width="18.2" height="5.6" fill="#f3f3f3" />
<path d="M27 97.9 v-4.8 h5 v-2.9 h6.8 v2.9 h5.2 v4.8 z M34.3 92.3 v2.6 h2.6 v-2.6 z" fill="#7a7a7a" fill-rule="evenodd"/>
<path d="M41.5 108.6 H50.6 L55.5 113.5 V127.4 H41.5 Z" fill="#fff" stroke="#7a7a7a" stroke-width="1.2" />
<path d="M50.6 108.6 V113.5 H55.5" fill="none" stroke="#7a7a7a" stroke-width="1.1" />
<path d="M32.80 157.90 L36.00 161.10 L39.20 157.90" fill="none" stroke="#444" stroke-width="1.1"/>
<path d="M69.9 89.2 L71 89.2 L79.5 100.5 L77.5 101.2 Z" fill="#6b6b6b" />
<path d="M80.1 89.2 L79 89.2 L70.5 100.5 L72.5 101.2 Z" fill="#6b6b6b" />
<circle cx="70.6" cy="103.7" r="2.6" fill="none" stroke="#3f7fbf" stroke-width="1.3"/><circle cx="79.4" cy="103.7" r="2.6" fill="none" stroke="#3f7fbf" stroke-width="1.3"/>
<path d="M67.7 118.6 H73.4 L76.7 121.9 V130.8 H67.7 Z" fill="#fff" stroke="#6b6b6b" stroke-width="1.1" />
<path d="M73.4 118.6 V121.9 H76.7" fill="none" stroke="#6b6b6b" stroke-width="1.1" />
<path d="M69.2 121.5 H72.4 M69.2 124.4 H72.4 M69.2 127.3 H72.4" fill="none" stroke="#3f7fbf" stroke-width="1.1" />
<path d="M74.7 124.2 H80.2 L83.5 127.5 V135.6 H74.7 Z" fill="#fff" stroke="#6b6b6b" stroke-width="1.1" />
<path d="M80.2 124.2 V127.5 H83.5" fill="none" stroke="#6b6b6b" stroke-width="1.1" />
<path d="M76.4 126.8 H79 M76.4 129.6 H81.9 M76.4 132.4 H81.9" fill="none" stroke="#3f7fbf" stroke-width="1.1" />
<path d="M138.80 125.90 L142.00 129.10 L145.20 125.90" fill="none" stroke="#444" stroke-width="1.1"/>
<g transform="translate(77.5,155.6) rotate(-41)">
<path d="M-7.8 -5.3 L-0.3 -3.8 V3.8 L-7.8 5.3 Z" fill="#eec77a" />
<rect x="0.2" y="-4.2" width="3" height="8.4" fill="#6a6a6a" />
<rect x="3.8" y="-2" width="4.2" height="4" fill="#6a6a6a" />
</g>
<path d="M190.5 189 V181.5 H199" fill="none" stroke="#777" stroke-width="1" />
<path d="M193.6 184.6 L199 190 M199.2 185.6 V190.2 H194.6" fill="none" stroke="#555" stroke-width="1.1" />
<path d="M478.5 189 V181.5 H487" fill="none" stroke="#777" stroke-width="1" />
<path d="M481.6 184.6 L487 190 M487.2 185.6 V190.2 H482.6" fill="none" stroke="#555" stroke-width="1.1" />
<path d="M871.7 189 V181.5 H880.2" fill="none" stroke="#777" stroke-width="1" />
<path d="M874.8000000000001 184.6 L880.2 190 M880.4000000000001 185.6 V190.2 H875.8000000000001" fill="none" stroke="#555" stroke-width="1.1" />
<path d="M1065.5 189 V181.5 H1074" fill="none" stroke="#777" stroke-width="1" />
<path d="M1068.6 184.6 L1074 190 M1074.2 185.6 V190.2 H1069.6" fill="none" stroke="#555" stroke-width="1.1" />
<path d="M346.80 106.90 H353.20 L350.00 110.10 Z" fill="#555"/>
<path d="M410.80 106.90 H417.20 L414.00 110.10 Z" fill="#555"/>
<path d="M442 102 L445 99 L448 102 Z" fill="#3f7fbf" />
<path d="M471 100 H477 L474 103 Z" fill="#3f7fbf" />
<path d="M308.80 145.80 L312.00 149.00 L315.20 145.80" fill="none" stroke="#444" stroke-width="1.1"/>
<path d="M364.80 145.80 L368.00 149.00 L371.20 145.80" fill="none" stroke="#444" stroke-width="1.1"/>
<path d="M420.80 145.80 L424.00 149.00 L427.20 145.80" fill="none" stroke="#444" stroke-width="1.1"/>
<path d="M469.80 145.80 L473.00 149.00 L476.20 145.80" fill="none" stroke="#444" stroke-width="1.1"/>
<rect x="336.5" y="138.5" width="16" height="16" fill="#fff" />
<path d="M336 138.5 H353 M336 146.5 H353" fill="none" stroke="#555" stroke-width="1" stroke-dasharray="1 1" shape-rendering="crispEdges"/>
<path d="M336.5 138 V154 M344.5 138 V154 M352.5 138 V154" fill="none" stroke="#555" stroke-width="1" stroke-dasharray="1 1" shape-rendering="crispEdges"/>
<rect x="336" y="154" width="17" height="1.2" fill="#555" />
<path d="M394.2 146.3 L401.2 139.6 L407.3 145.1 L400.8 151.9 Z" fill="#fff" stroke="#5c5c5c" stroke-width="1.15" stroke-linejoin="round"/>
<path d="M398.4 141.6 V139.2 a2.05 2 0 0 1 4.1 0 V143.6" fill="none" stroke="#5c5c5c" stroke-width="1.15" />
<path d="M404.8 141.9 Q410.8 142.6 410 147 Q409.4 150 407.4 151.6 Q408.4 147 407.4 145.2 Z" fill="#3a78b8" />
<path d="M508.0 99.5 H526.0" fill="none" stroke="#5c5c5c" stroke-width="1.1" />
<path d="M510.5 102.6 H523.5" fill="none" stroke="#5c5c5c" stroke-width="1.1" />
<path d="M508.0 105.6 H526.0" fill="none" stroke="#5c5c5c" stroke-width="1.1" />
<path d="M538.0 103.5 H556.0" fill="none" stroke="#5c5c5c" stroke-width="1.1" />
<path d="M540.5 106.6 H553.5" fill="none" stroke="#5c5c5c" stroke-width="1.1" />
<path d="M538.0 109.6 H556.0" fill="none" stroke="#5c5c5c" stroke-width="1.1" />
<path d="M540.5 112.7 H553.5" fill="none" stroke="#5c5c5c" stroke-width="1.1" />
<path d="M568.0 107.4 H586.0" fill="none" stroke="#5c5c5c" stroke-width="1.1" />
<path d="M570.5 110.5 H583.5" fill="none" stroke="#5c5c5c" stroke-width="1.1" />
<path d="M568.0 113.5 H586.0" fill="none" stroke="#5c5c5c" stroke-width="1.1" />
<path d="M570.5 116.6 H583.5" fill="none" stroke="#5c5c5c" stroke-width="1.1" />
<path d="M509.8 142.5 H524.0" fill="none" stroke="#5c5c5c" stroke-width="1.1" />
<path d="M509.8 145.6 H520.0" fill="none" stroke="#5c5c5c" stroke-width="1.1" />
<path d="M509.8 148.7 H524.0" fill="none" stroke="#5c5c5c" stroke-width="1.1" />
<path d="M509.8 151.8 H520.0" fill="none" stroke="#5c5c5c" stroke-width="1.1" />
<path d="M538.8 142.5 H555.0" fill="none" stroke="#5c5c5c" stroke-width="1.1" />
<path d="M541.1 145.6 H552.7" fill="none" stroke="#5c5c5c" stroke-width="1.1" />
<path d="M538.8 148.7 H555.0" fill="none" stroke="#5c5c5c" stroke-width="1.1" />
<path d="M541.1 151.8 H552.7" fill="none" stroke="#5c5c5c" stroke-width="1.1" />
<path d="M569.7 142.5 H584.2" fill="none" stroke="#5c5c5c" stroke-width="1.1" />
<path d="M573.8 145.6 H584.2" fill="none" stroke="#5c5c5c" stroke-width="1.1" />
<path d="M569.7 148.7 H584.2" fill="none" stroke="#5c5c5c" stroke-width="1.1" />
<path d="M573.8 151.8 H584.2" fill="none" stroke="#5c5c5c" stroke-width="1.1" />
<text transform="translate(607.6,115) rotate(-45)" font-size="13.5" fill="#5c5c5c" stroke="#5c5c5c" stroke-width="0.25" font-family="Liberation Sans, sans-serif">ab</text>
<path d="M612.3 115.7 L622.4 105.6 M618.6 105.3 H622.7 V109.2" fill="none" stroke="#5c5c5c" stroke-width="1.3" />
<path d="M630.80 106.90 L634.00 110.10 L637.20 106.90" fill="none" stroke="#444" stroke-width="1.1"/>
<path d="M688.80 106.90 L692.00 110.10 L695.20 106.90" fill="none" stroke="#444" stroke-width="1.1"/>
<path d="M661.2 103.8 L665.6 107.6 L661.2 111.4 Z" fill="#3f7fbf" />
<path d="M675.8 103.4 H670.4 a2.7 2.7 0 0 0 0 5.4 H671.4 V112.8 M674 103.4 V112.8" fill="none" stroke="#5c5c5c" stroke-width="1.2"/>
<path d="M670.6 103.6 a2.5 2.5 0 0 0 0 5 H671.4 V103.6 Z" fill="#5c5c5c" />
<path d="M604.8 139.5 H623.0999999999999 M604.8 154.3 H623.0999999999999" fill="none" stroke="#5c5c5c" stroke-width="1.1" />
<path d="M613.1999999999999 143.2 H623.0999999999999 M613.1999999999999 146.9 H623.0999999999999 M613.1999999999999 150.6 H623.0999999999999" fill="none" stroke="#5c5c5c" stroke-width="1.1" />
<path d="M611.8 146.9 H605.8 M608.5999999999999 143.8 L605.4 146.9 L608.5999999999999 150" fill="none" stroke="#3f7fbf" stroke-width="1.7" />
<path d="M634.9 139.5 H653.1999999999999 M634.9 154.3 H653.1999999999999" fill="none" stroke="#5c5c5c" stroke-width="1.1" />
<path d="M643.3 143.2 H653.1999999999999 M643.3 146.9 H653.1999999999999 M643.3 150.6 H653.1999999999999" fill="none" stroke="#5c5c5c" stroke-width="1.1" />
<path d="M634.9 146.9 H640.9 M638.1 143.8 L641.3 146.9 L638.1 150" fill="none" stroke="#3f7fbf" stroke-width="1.7" />
<text x="719.4" y="108.6" font-size="11.5" fill="#5c5c5c" font-family="Liberation Sans, sans-serif" >ab</text>
<text x="719.4" y="116.6" font-size="11.5" fill="#5c5c5c" font-family="Liberation Sans, sans-serif" >c</text>
<path d="M734.6 109.6 V111.4 a2.2 2.2 0 0 1 -2.2 2.2 H727.6 M730 111.2 L727.4 113.6 L730 116" fill="none" stroke="#3f7fbf" stroke-width="1.2" />
<rect x="717.5" y="137.8" width="18" height="17.6" fill="#fff" stroke="#777" stroke-width="1" />
<path d="M717.5 142.4 H735.5 M717.5 150.8 H735.5 M726.5 137.8 V142.4 M726.5 150.8 V155.4" fill="none" stroke="#777" stroke-width="1" />
<path d="M720 146.6 H733 M722.4 144.4 L720 146.6 L722.4 148.8 M730.6 144.4 L733 146.6 L730.6 148.8" fill="none" stroke="#3f7fbf" stroke-width="1.2" />
<path d="M861.80 145.80 L865.00 149.00 L868.20 145.80" fill="none" stroke="#444" stroke-width="1.1"/>
<path d="M1057.30 106.65 H1064.10 L1060.70 109.95 Z" fill="#555"/>
<path d="M929.50 145.80 L932.70 149.00 L935.90 145.80" fill="none" stroke="#444" stroke-width="1.1"/>
<text x="1025.2" y="145.8" font-size="9.6" fill="#5c5c5c" font-family="Liberation Sans, sans-serif" >.0</text>
<text x="1020.2" y="155" font-size="9.6" fill="#5c5c5c" font-family="Liberation Sans, sans-serif" >.00</text>
<path d="M1025.8 142.9 H1019.4 M1022 140 L1018.9 142.9 L1022 145.8" fill="none" stroke="#3f7fbf" stroke-width="1.8" />
<text x="1050.7" y="145.8" font-size="9.6" fill="#5c5c5c" font-family="Liberation Sans, sans-serif" >.00</text>
<text x="1055.8" y="155" font-size="9.6" fill="#5c5c5c" font-family="Liberation Sans, sans-serif" >.0</text>
<path d="M1047.8 152.2 H1054.2 M1051.6 149.3 L1054.7 152.2 L1051.6 155.1" fill="none" stroke="#3f7fbf" stroke-width="1.8" />
<rect x="1119.5" y="94.5" width="33" height="27" fill="#fff" stroke="#8a8a8a" stroke-width="1" />
<path d="M1119.5 101.3 H1152.5 M1119.5 108 H1152.5 M1119.5 114.8 H1152.5 M1129.5 94.5 V121.5 M1142.5 94.5 V121.5" fill="none" stroke="#a0a0a0" stroke-width="1" />
<rect x="1130" y="95" width="7" height="6" fill="#d9623b" />
<rect x="1130" y="101.8" width="11" height="6" fill="#3f7fbf" />
<rect x="1130" y="108.5" width="9" height="6" fill="#d9623b" />
<rect x="1130" y="115.3" width="5.4" height="6" fill="#3f7fbf" />
<rect x="1137.8" y="113.5" width="18" height="14" fill="#fff" stroke="#777" stroke-width="1" />
<text x="1142.4" y="125.6" font-size="13.5" fill="#444" font-family="Liberation Sans, sans-serif" >&#8800;</text>
<path d="M1170.80 157.80 L1174.00 161.00 L1177.20 157.80" fill="none" stroke="#444" stroke-width="1.1"/>
<rect x="1200.5" y="93.8" width="32" height="28" fill="#fff" stroke="#8a8a8a" stroke-width="1" />
<rect x="1208.5" y="100.8" width="24" height="21" fill="#bdd3ea" />
<path d="M1200.5 100.8 H1232.5 M1200.5 107.8 H1232.5 M1200.5 114.8 H1232.5 M1208.5 93.8 V121.8 M1216.5 93.8 V121.8 M1224.5 93.8 V121.8" fill="none" stroke="#a0a0a0" stroke-width="1" />
<path d="M1234.6 102 L1237.0 104.6 V109 L1228.6 117.4 L1225.1999999999998 114 Z" fill="#7d7d7d" />
<path d="M1224.1999999999998 115 L1227.6 118.4 L1226.0 120 L1222.6 116.6 Z" fill="#fff" stroke="#999" stroke-width="0.6" />
<path d="M1222.0 117.4 L1225.3999999999999 120.8 Q1224.1999999999998 126 1217.6 127.6 H1210.1999999999998 Q1215.6 124 1217.0 120.4 Q1218.6 117.4 1222.0 117.4 Z" fill="#3f7fbf" />
<path d="M1220.6 121 Q1223.1999999999998 120.4 1223.8 122.6 Q1222.3999999999999 124.4 1220.3999999999999 124.6 Z" fill="#dbe8f5" />
<path d="M1232.80 157.80 L1236.00 161.00 L1239.20 157.80" fill="none" stroke="#444" stroke-width="1.1"/>
<rect x="1262.5" y="90.5" width="33" height="28" fill="#fff" stroke="#8a8a8a" stroke-width="1" />
<path d="M1262.5 97.4 H1295.5 M1262.5 111.4 H1295.5 M1269.5 90.5 V118.5 M1288.5 90.5 V118.5" fill="none" stroke="#a0a0a0" stroke-width="1" />
<rect x="1270" y="97.9" width="18" height="13" fill="#bdd3ea" />
<path d="M1297.8 102 L1300.2 104.6 V109 L1291.8 117.4 L1288.3999999999999 114 Z" fill="#7d7d7d" />
<path d="M1287.3999999999999 115 L1290.8 118.4 L1289.2 120 L1285.8 116.6 Z" fill="#fff" stroke="#999" stroke-width="0.6" />
<path d="M1285.2 117.4 L1288.6 120.8 Q1287.3999999999999 126 1280.8 127.6 H1273.3999999999999 Q1278.8 124 1280.2 120.4 Q1281.8 117.4 1285.2 117.4 Z" fill="#3f7fbf" />
<path d="M1283.8 121 Q1286.3999999999999 120.4 1287.0 122.6 Q1285.6 124.4 1283.6 124.6 Z" fill="#dbe8f5" />
<path d="M1297.80 157.80 L1301.00 161.00 L1304.20 157.80" fill="none" stroke="#444" stroke-width="1.1"/>
<rect x="1339.5" y="91.6" width="18" height="6" fill="#fff" stroke="#6e6e6e" stroke-width="1" />
<path d="M1348.5 91.6 V97.6 " fill="none" stroke="#6e6e6e" stroke-width="1" />
<rect x="1339.5" y="113.9" width="18" height="11.6" fill="#fff" stroke="#6e6e6e" stroke-width="1" />
<path d="M1339.5 119.7 H1357.5 M1348.5 113.9 V125.5 " fill="none" stroke="#6e6e6e" stroke-width="1" />
<rect x="1353.8" y="102.3" width="18" height="6.2" fill="#bdd3ea" stroke="#8a8a8a" stroke-width="1" />
<path d="M1362.8 102.3 V108.5 " fill="none" stroke="#8a8a8a" stroke-width="1" />
<path d="M1351 105.4 H1339 M1343.4 100.2 L1337.4 105.4 L1343.4 110.6" fill="none" stroke="#3f7fbf" stroke-width="2.4" />
<path d="M1351.80 157.80 L1355.00 161.00 L1358.20 157.80" fill="none" stroke="#444" stroke-width="1.1"/>
<rect x="1391.5" y="91.6" width="18" height="6" fill="#fff" stroke="#6e6e6e" stroke-width="1" />
<path d="M1400.5 91.6 V97.6 " fill="none" stroke="#6e6e6e" stroke-width="1" />
<rect x="1391.5" y="111.8" width="18" height="11.6" fill="#fff" stroke="#6e6e6e" stroke-width="1" />
<path d="M1391.5 117.6 H1409.5 M1400.5 111.8 V123.39999999999999 " fill="none" stroke="#6e6e6e" stroke-width="1" />
<path d="M1407.8 102 L1413 104.5 L1407.8 107 Z" fill="#cfdff0" />
<rect x="1398.8" y="101.9" width="9" height="5.4" fill="#bdd3ea" stroke="#6e6e6e" stroke-width="1.1" />
<path d="M1409.2 97.4 L1410.8 96.9 Q1418 103 1425.9 112.4 L1425.3 112.9 Q1417 105.5 1408.3 99.6 Z" fill="#d8613c" />
<path d="M1425.9 98 L1425.5 97.5 Q1416 102 1408.3 110.6 L1409.6 112.6 Q1416.5 104.5 1425.9 98 Z" fill="#d8613c" />
<path d="M1403.80 157.80 L1407.00 161.00 L1410.20 157.80" fill="none" stroke="#444" stroke-width="1.1"/>
<path d="M1442.5 90 V95.8 M1469.4 90 V95.8" fill="none" stroke="#3f7fbf" stroke-width="1.2" />
<path d="M1445.6 92.9 H1466.4 M1448.4 90.2 L1445.4 92.9 L1448.4 95.6 M1463.6 90.2 L1466.6 92.9 L1463.6 95.6" fill="none" stroke="#3f7fbf" stroke-width="1.8" />
<rect x="1442.6" y="98.6" width="32.8" height="23.8" fill="#fff" stroke="#6e6e6e" stroke-width="1.2" />
<path d="M1442.6 104.4 H1475.4 M1442.6 116.4 H1475.4 M1450.5 98.6 V122.4 M1460.5 98.6 V122.4 M1469.4 98.6 V122.4" fill="none" stroke="#b4b4b4" stroke-width="1" />
<rect x="1451" y="105" width="9" height="11" fill="#3f7fbf" />
<path d="M1442.6 122.4 V126.2 H1451 L1453.4 123.2 H1454.4 V126.2 H1462.6 L1465 123" fill="none" stroke="#6e6e6e" stroke-width="1" />
<path d="M1455.80 157.80 L1459.00 161.00 L1462.20 157.80" fill="none" stroke="#444" stroke-width="1.1"/>
<path d="M1608.80 96.80 L1612.00 100.00 L1615.20 96.80" fill="none" stroke="#444" stroke-width="1.1"/>
<path d="M1557.80 124.80 L1561.00 128.00 L1564.20 124.80" fill="none" stroke="#444" stroke-width="1.1"/>
<path d="M1572.80 153.90 L1576.00 157.10 L1579.20 153.90" fill="none" stroke="#444" stroke-width="1.1"/>
<path d="M1663.80 157.80 L1667.00 161.00 L1670.20 157.80" fill="none" stroke="#444" stroke-width="1.1"/>
<path d="M1722.80 157.80 L1726.00 161.00 L1729.20 157.80" fill="none" stroke="#444" stroke-width="1.1"/>
<rect x="1510.3" y="118.5" width="16.4" height="17" fill="#fff" stroke="#777" stroke-width="1" />
<rect x="1510" y="118.2" width="17" height="2.6" fill="#777" />
<path d="M1518.5 122.8 V131.4 M1514.4 127.6 L1518.5 131.8 L1522.6 127.6" fill="none" stroke="#3f7fbf" stroke-width="2.2" />
<path d="M1511.2 158.6 L1521.6 148.2 L1527 153.6 L1516.6 164 Z" fill="#e9889b" />
<path d="M1511.2 158.6 L1513.8 156 L1519.2 161.4 L1516.6 164 Z" fill="#f2b3bf" />
<text x="1631.2" y="105.6" font-size="18" fill="#3f7fbf" stroke="#3f7fbf" stroke-width="0.4" font-family="Liberation Sans, sans-serif">A</text>
<text x="1631.6" y="122.8" font-size="18" fill="#9b59b6" stroke="#9b59b6" stroke-width="0.4" font-family="Liberation Sans, sans-serif">Z</text>
<path d="M1648 99 H1666 L1659.2 106.8 V115.8 H1654.8 V106.8 Z" fill="#7d7d7d" />
<path d="M1656.2 107.6 V114.6 H1657.8 V107.6 Z" fill="#f3f3f3" />
<circle cx="1708.4" cy="103.4" r="11.4" fill="#fff" stroke="#3f7fbf" stroke-width="2.3"/>
<path d="M1699.8 112.4 L1689 123.2" fill="none" stroke="#3f7fbf" stroke-width="3.8" stroke-linecap="round"/>
<path d="M1896.8 190.2 L1903.3 184.4 L1909.8 190.2" fill="none" stroke="#444" stroke-width="1.2" />
<path d="M116.80 221.20 H124.20 L120.50 224.80 Z" fill="#666"/>
<path d="M185.8 217 L199.8 229.6" fill="none" stroke="#bcbcbc" stroke-width="1.5" />
<path d="M185.6 229.6 L199.4 217.2" fill="none" stroke="#bcbcbc" stroke-width="2.2" />
<path d="M230.4 223.4 L236.2 229.8" fill="none" stroke="#bcbcbc" stroke-width="2.8" />
<path d="M235.6 230 L246.8 217.2" fill="none" stroke="#bcbcbc" stroke-width="1.9" />
<path d="M1899 220.4 L1903.4 224.8 L1907.8 220.4" fill="none" stroke="#666" stroke-width="2.2" />
<path d="M29.8 254.6 V269.8 H14.6 Z" fill="#b9b9b9" />
<path d="M1902.8 263.4 H1912.2 L1907.5 258.4 Z" fill="#777" />
<path d="M1902.8 964 H1912.2 L1907.5 969 Z" fill="#777" />
<path d="M1178.4 984.2 V992.8 L1173.6 988.5 Z" fill="#555" />
<path d="M1883.2 984.2 V992.8 L1888 988.5 Z" fill="#555" />
<path d="M33.2 984 V992.6 L27.6 988.3 Z" fill="#c8c8c8" />
<path d="M56.8 984 V992.6 L62.2 988.3 Z" fill="#c8c8c8" />
<circle cx="225" cy="988.7" r="9.5" fill="none" stroke="#7d7d7d" stroke-width="1.2"/>
<path d="M220.4 988.7 H229.6 M225 984.1 V993.3" fill="none" stroke="#7d7d7d" stroke-width="1.5" />
<path d="M76.4 1010.7 A7.8 7.8 0 0 0 76.4 1026" fill="none" stroke="#555" stroke-width="1.1" stroke-dasharray="3.6 1.9"/>
<path d="M77.5 1008.8 V1016.4 M75.3 1014 L77.5 1016.5 L79.7 1014" fill="none" stroke="#555" stroke-width="1.1" />
<path d="M78.6 1015.4 H85.6 M83.3 1013.2 L85.8 1015.4 L83.3 1017.6" fill="none" stroke="#555" stroke-width="1.1" />
<path d="M78.8 1021.4 L82.3 1025.4 L88 1018.3" fill="none" stroke="#444" stroke-width="2" />
<path d="M1565.8 1009.8 H1580.4 V1024.4 H1565.8 Z M1570.7 1009.8 V1024.4 M1575.6 1009.8 V1024.4 M1565.8 1014.7 H1580.4 M1565.8 1019.6 H1580.4" fill="none" stroke="#666" stroke-width="1.2" />
<rect x="1614.7" y="1009.8" width="15.6" height="13.6" fill="#fff" stroke="#666" stroke-width="1.2" />
<rect x="1618.8" y="1011.6" width="7.6" height="9.8" fill="none" stroke="#666" stroke-width="1.1" />
<path d="M1620.3 1014.4 H1625 M1620.3 1016.4 H1625 M1620.3 1018.4 H1625" fill="none" stroke="#666" stroke-width="0.9" />
<rect x="1664.7" y="1009.8" width="15.6" height="14.5" fill="#fff" stroke="#666" stroke-width="1.2" />
<path d="M1669.7 1009.8 V1018 M1674.3 1009.8 V1018 M1664.7 1018 H1674.9" fill="none" stroke="#666" stroke-width="1.1" />
<rect x="1705" y="1016.2" width="9.6" height="1.3" fill="#555" />
<rect x="1721" y="1017" width="125" height="1" fill="#5f5f5f" />
<rect x="1781.4" y="1010" width="5.6" height="13.8" fill="#5c5c5c" />
<path d="M1852 1016.8 H1861.4 M1856.7 1012.2 V1021.4" fill="none" stroke="#555" stroke-width="1.3" />
<path d="M284.5 270.5 H321.5 V657.5 H283.3" fill="none" stroke="#ed1c24" stroke-width="5" stroke-linecap="round" stroke-linejoin="round"/>
<path d="M325.6 464.7 L388.5 428.5 V446.5 H453.4 V483.5 H388.5 V501.4 Z" fill="none" stroke="#ed1c24" stroke-width="5" stroke-linejoin="round"/>
</svg>
</body></html>
